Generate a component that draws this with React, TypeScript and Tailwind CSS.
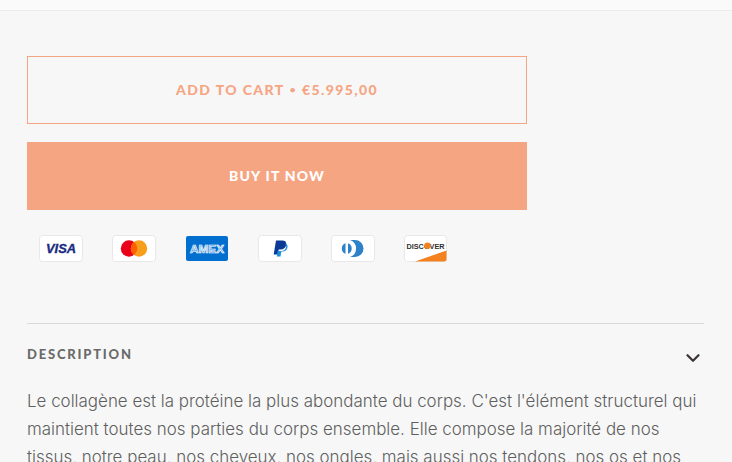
import { ChevronDown } from 'lucide-react';

function CardFrame({ children }: { children: React.ReactNode }) {
  return (
    <svg width="44" height="28" viewBox="0 0 44 28">
      <rect x="0.5" y="0.5" width="43" height="26" rx="3" fill="#ffffff" stroke="#e8e8e8" />
      {children}
    </svg>
  );
}

function Visa() {
  return (
    <CardFrame>
      <text x="22" y="18" textAnchor="middle" fontFamily="'Liberation Sans', sans-serif" fontSize="12" fontWeight="700" fontStyle="italic" fill="#172a80" stroke="#172a80" strokeWidth="0.3" textLength="30" lengthAdjust="spacingAndGlyphs">
        VISA
      </text>
    </CardFrame>
  );
}

function Mastercard() {
  return (
    <CardFrame>
      <circle cx="17" cy="13.500" r="8.200" fill="#eb001b" />
      <circle cx="27" cy="13.500" r="8.200" fill="#f79e1b" />
      <path d="M22 7a8.200 8.200 0 0 1 0 13a8.200 8.200 0 0 1 0-13z" fill="#ff5f00" />
    </CardFrame>
  );
}

function Amex() {
  return (
    <svg width="44" height="28" viewBox="0 0 44 28">
      <rect x="1" y="1" width="42" height="25" rx="2" fill="#016fd0" />
      <text x="22" y="17.500" textAnchor="middle" fontFamily="'Liberation Sans', sans-serif" fontSize="10" fontWeight="700" fill="#5a9fdf" stroke="#ffffff" strokeWidth="0.6" textLength="34" lengthAdjust="spacingAndGlyphs">
        AMEX
      </text>
    </svg>
  );
}

function Paypal() {
  return (
    <CardFrame>
      <path d="M18 5.500h6c3.200 0 4.700 1.600 4.200 4.200c-.6 3.400-2.800 4.700-5.500 4.700h-2l-.8 5h-4.200z" fill="#0b3a96" />
      <path d="M27.500 8.500c1.700.7 2.300 2.100 2 3.800c-.5 3-2.500 4.300-4.800 4.300h-1.400l-.8 4.900h-3.700l.9-5.500h3.400c2.800 0 4.700-1.500 5-4.300z" fill="#1f8fdc" />
    </CardFrame>
  );
}

function Diners() {
  return (
    <CardFrame>
      <path d="M19 5h5a8.500 8.500 0 0 1 0 17h-5a9 9 0 0 0 0-17z" fill="#2d81c8" />
      <path d="M14.500 8.300v10.400a5.500 5.500 0 0 1 0-10.400z" fill="#2d81c8" />
      <path d="M17 8.300a5.500 5.500 0 0 1 0 10.400z" fill="#2d81c8" />
    </CardFrame>
  );
}

function Discover() {
  return (
    <svg width="44" height="28" viewBox="0 0 44 28">
      <rect x="0.5" y="0.500" width="42" height="26" rx="3" fill="#ffffff" stroke="#e8e8e8" />
      <path d="M11 26.500L42.500 15.500V24a2.500 2.500 0 0 1-2.500 2.500H11z" fill="#f48120" />
      <text x="21.500" y="13.800" textAnchor="middle" fontFamily="'Liberation Sans', sans-serif" fontSize="8" fontWeight="700" fill="#2f2f2f" textLength="38" lengthAdjust="spacingAndGlyphs">
        DISCOVER
      </text>
      <circle cx="23.500" cy="10.800" r="3.200" fill="#f48120" />
    </svg>
  );
}

export default function App() {
  return (
    <div className="h-[462px] w-[732px] overflow-hidden bg-[#f7f7f7] font-['Lato',sans-serif]">
      <div className="h-[11px] border-b border-[#ebebeb] bg-[#fafafa]" />

      <div className="px-[27px] pt-[45px]">
        <div className="flex w-[500px] flex-col gap-[18px]">
          <button className="flex h-[68px] items-center justify-center border border-[#f6a583] pb-[2px] text-[14px] font-black tracking-[1.4px] text-[#f6a583]">
            ADD TO CART <span className="mx-[5px] text-[10px]">•</span> €5.995,00
          </button>
          <button className="flex h-[68px] items-center justify-center bg-[#f6a583] pb-[2px] text-[14px] font-black tracking-[1.2px] text-white">
            BUY IT NOW
          </button>
        </div>

        <div className="mt-[25px] flex gap-[29px] pl-[12px]">
          <Visa />
          <Mastercard />
          <Amex />
          <Paypal />
          <Diners />
          <Discover />
        </div>

        <div className="mt-[60px] w-[677px] border-t border-[#d9d9d9]">
          <div className="flex items-start justify-between pt-[22px]">
            <span className="text-[13px] leading-[17px] font-black tracking-[1.8px] text-[#6a6a6a]">DESCRIPTION</span>
            <ChevronDown className="mt-[1px] h-[22px] w-[22px] text-[#3d3535]" strokeWidth={2.500} />
          </div>
          <p className="mt-[18px] font-['Inter',sans-serif] text-[16.95px] leading-[28px] font-light whitespace-nowrap text-[#5f5f5f]">
            Le collagène est la protéine la plus abondante du corps. C'est l'élément structurel qui
            <br />
            maintient toutes nos parties du corps ensemble. Elle compose la majorité de nos
            <br />
            tissus, notre peau, nos cheveux, nos ongles, mais aussi nos tendons, nos os et nos
          </p>
        </div>
      </div>
    </div>
  );
}
